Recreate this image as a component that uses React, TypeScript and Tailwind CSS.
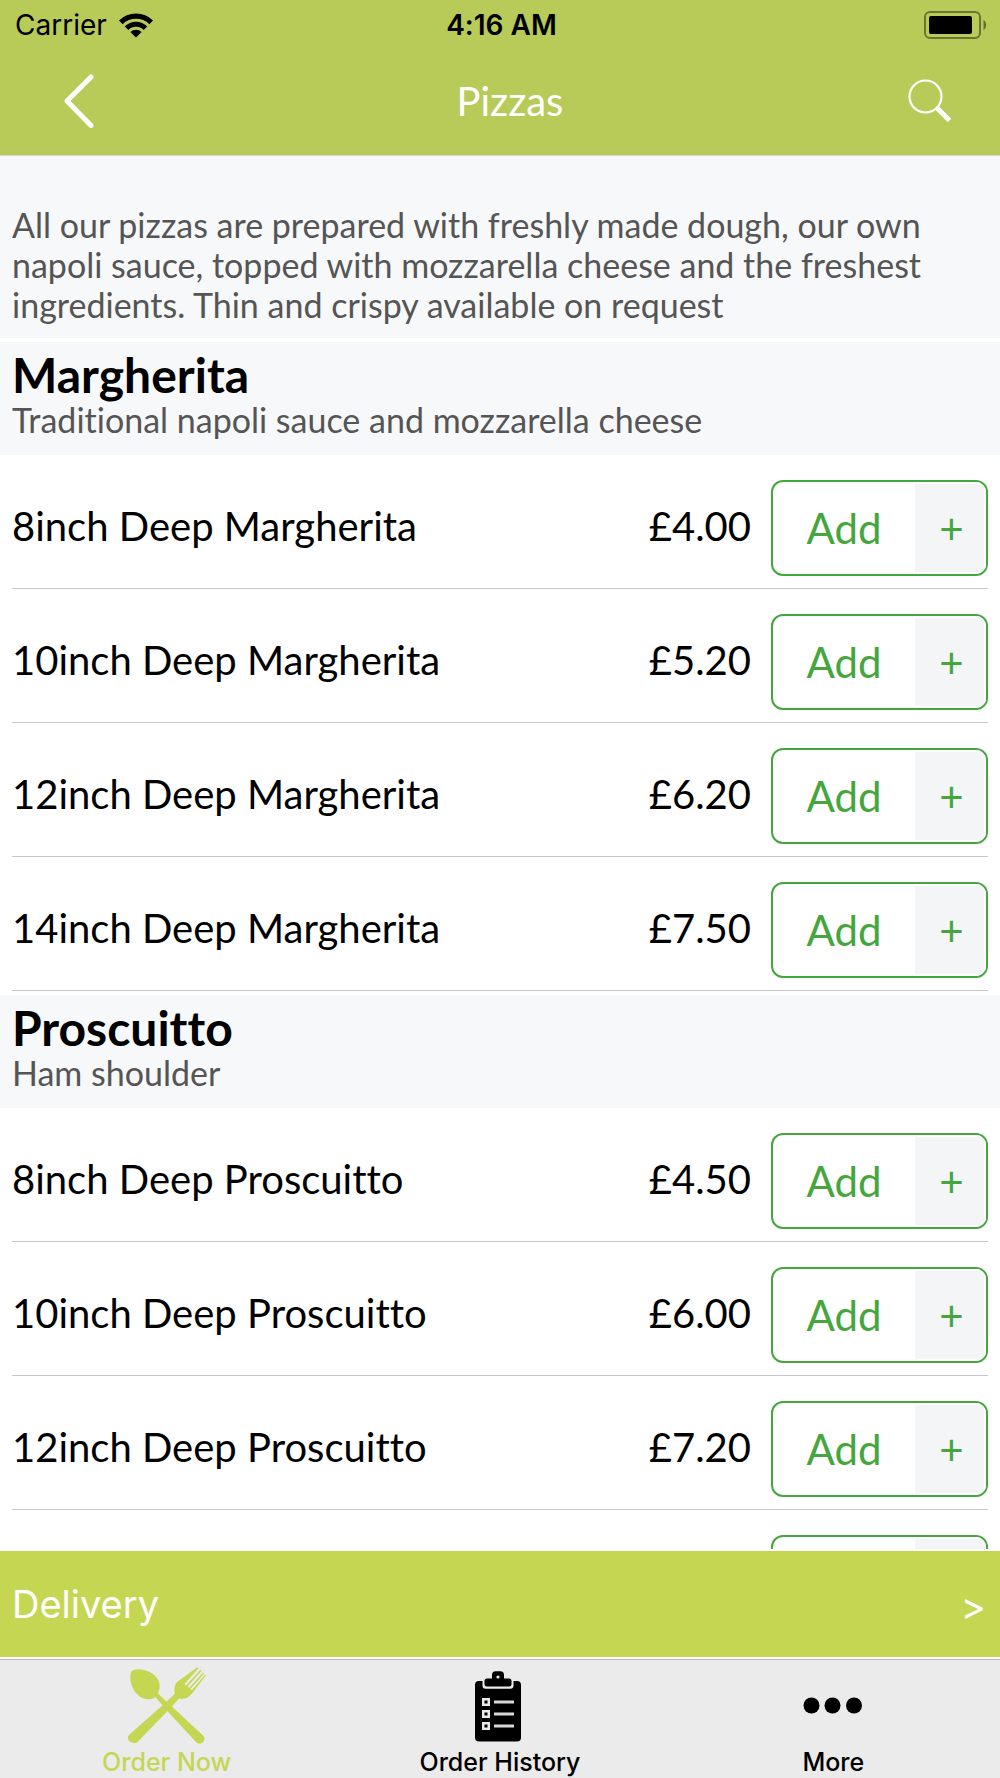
import React from "react";

type Item = { name: string; price: string };
type Section = { title: string; description: string; items: Item[] };

const sections: Section[] = [
  {
    title: "Margherita",
    description: "Traditional napoli sauce and mozzarella cheese",
    items: [
      { name: "8inch Deep Margherita", price: "£4.00" },
      { name: "10inch Deep Margherita", price: "£5.20" },
      { name: "12inch Deep Margherita", price: "£6.20" },
      { name: "14inch Deep Margherita", price: "£7.50" },
    ],
  },
  {
    title: "Proscuitto",
    description: "Ham shoulder",
    items: [
      { name: "8inch Deep Proscuitto", price: "£4.50" },
      { name: "10inch Deep Proscuitto", price: "£6.00" },
      { name: "12inch Deep Proscuitto", price: "£7.20" },
    ],
  },
];

function WifiIcon() {
  return (
    <svg width="34" height="25" viewBox="0 0 34 25" aria-hidden="true">
      <path d="M0 7.500a24 24 0 0 1 34 0l-3.600 3.700a19 19 0 0 0-26.800 0z" />
      <path d="M5.700 13.300a16 16 0 0 1 22.600 0l-3.600 3.600a11 11 0 0 0-15.400 0z" />
      <path d="M11.400 19a8 8 0 0 1 11.200 0L17 24.600z" />
    </svg>
  );
}

function BatteryIcon() {
  return (
    <svg width="64" height="28" viewBox="0 0 64 28" aria-hidden="true">
      <rect x="1" y="1" width="55" height="26" rx="5" fill="none" stroke="#000" strokeOpacity="0.42" strokeWidth="2" />
      <rect x="5" y="5" width="43" height="18" rx="2" />
      <path d="M59.500 9c3.500 1.500 3.500 8.500 0 10z" fillOpacity="0.45" />
    </svg>
  );
}

function BackIcon() {
  return (
    <svg width="30" height="56" viewBox="0 0 30 56" fill="none" aria-hidden="true">
      <path d="M27 4L3 28l24 24.500" stroke="#fff" strokeWidth="5" strokeLinecap="round" strokeLinejoin="round" />
    </svg>
  );
}

function SearchIcon() {
  return (
    <svg width="44" height="44" viewBox="0 0 44 44" fill="none" stroke="#fff" aria-hidden="true">
      <circle cx="17.500" cy="17.500" r="16" strokeWidth="2.200" />
      <path d="M28.500 28.500L41.500 41.500" strokeWidth="5" />
    </svg>
  );
}

function CutleryIcon() {
  return (
    <svg width="80" height="80" viewBox="0 0 80 80" fill="currentColor" aria-hidden="true">
      <path d="M4 8C6 5 11 4.500 17 6c8 2 14.500 7.500 15.500 14 .5 4-.5 7-1.500 9.500l8.500 8L76 71.500c4.500 5-2.500 11-7 6.500L37.500 44 28.500 33c-3 2.500-8 3-12.500 1.300C8 31 1 19 4 8z" />
      <path d="M70.500 3.300l1 1L57.500 20l1.600 1.500L73.500 5.800l1 .9L60.500 22.500l1.600 1.500L76 8.500l1 .9L63.300 25l1.600 1.300L78 10.700l.8.800L66.500 27.500c-4.500 6.500-9.500 8.500-14.500 7L43.500 44 11 77.500C6.500 82-2.500 75.500 2 71L38 39l10-9.500c-1.500-4-.5-8 2-11.500z" />
    </svg>
  );
}

function ClipboardIcon() {
  return (
    <svg width="80" height="80" viewBox="0 0 80 80" aria-hidden="true">
      <rect x="15" y="17" width="46" height="60.500" rx="4" />
      <path d="M22.500 16v5.500q0 3.200 3.200 3.200h24.600q3.200 0 3.200-3.200V16z" fill="#ebebeb" />
      <path d="M27 14.500h5V11q0-3.700 3.700-3.700h4.600q3.700 0 3.700 3.700v3.500h5q2.500 0 2.500 2.500v3q0 2.500-2.500 2.500H27q-2.500 0-2.500-2.500v-3q0-2.500 2.500-2.500z" />
      <circle cx="38" cy="13" r="1.600" fill="#ebebeb" />
      {[34, 46, 58].map((y) => (
        <g key={y}>
          <rect x="22" y={y} width="8" height="8" fill="#ebebeb" />
          <rect x="24.500" y={y + 2.5} width="3" height="3" />
          <rect x="34" y={y + 2.5} width="20" height="3" fill="#d8d8d8" />
        </g>
      ))}
    </svg>
  );
}

function MoreIcon() {
  return (
    <svg width="80" height="80" viewBox="0 0 80 80" aria-hidden="true">
      <circle cx="18.500" cy="41.500" r="8" />
      <circle cx="39.500" cy="41.500" r="8" />
      <circle cx="61" cy="41.500" r="8" />
    </svg>
  );
}

function AddButton({ item }: { item: string }) {
  return (
    <button
      type="button"
      aria-label={`Add ${item}`}
      className="ml-5 flex h-24 w-[217px] shrink-0 overflow-hidden rounded-xl border-2 border-[#44a63c] text-[42px] leading-[48px] text-[#44a63c]"
    >
      <span className="flex flex-1 items-center justify-center">Add</span>
      <span className="flex w-[71px] items-center justify-center self-stretch border-2 border-l-0 border-white bg-[#f4f5f7] pl-1">
        +
      </span>
    </button>
  );
}

function NextRowPeek() {
  return (
    <div className="flex justify-end px-3 pt-[25px] pb-3" aria-hidden="true">
      <div className="flex h-24 w-[217px] justify-end overflow-hidden rounded-xl border-2 border-[#44a63c]">
        <div className="w-[71px] border-2 border-l-0 border-white bg-[#f4f5f7]" />
      </div>
    </div>
  );
}

function MenuSection({ section }: { section: Section }) {
  return (
    <section className="mt-1">
      <header className="h-[113px] bg-[#f7f8fa] px-3 pt-2">
        <h2 className="text-[48px] leading-[50px] font-bold">{section.title}</h2>
        <p className="text-[34px] leading-10 text-[#555]">{section.description}</p>
      </header>
      <ul className="px-3">
        {section.items.map((item) => (
          <li key={item.name} className="flex items-center border-b border-[#c8c8c8] pt-[25px] pb-3 text-[40px] leading-10">
            <span className="flex-1 pb-1">{item.name}</span>
            <span className="pb-1">{item.price}</span>
            <AddButton item={item.name} />
          </li>
        ))}
      </ul>
    </section>
  );
}

export default function App() {
  return (
    <div className="flex h-screen flex-col bg-white font-['Lato',sans-serif] text-black [font-variant-ligatures:none]">
      <header className="border-b border-[#d5d8d0] bg-[#b8ca58]">
        <div className="grid h-[50px] grid-cols-3 items-center pr-3 pl-[15px] font-['Inter',sans-serif] text-[28px] leading-8">
          <div className="flex items-center gap-3">
            <span>Carrier</span>
            <WifiIcon />
          </div>
          <span className="text-center font-semibold">4:16 AM</span>
          <div className="flex justify-end">
            <BatteryIcon />
          </div>
        </div>
        <div className="grid h-[105px] grid-cols-[112px_1fr_92px] items-center pb-1 text-white">
          <button type="button" aria-label="Back" className="flex justify-end pr-[18px]">
            <BackIcon />
          </button>
          <h1 className="text-center text-[40px] leading-10">Pizzas</h1>
          <button type="button" aria-label="Search" className="flex">
            <SearchIcon />
          </button>
        </div>
      </header>

      <main className="min-h-0 flex-1 overflow-y-auto [scrollbar-width:none]">
        <p className="bg-[#f7f8fa] px-3 pt-[49px] pb-[13px] text-[34px] leading-10 text-[#555]">
          All our pizzas are prepared with freshly made dough, our own napoli sauce, topped with mozzarella
          cheese and the freshest ingredients. Thin and crispy available on request
        </p>
        {sections.map((section) => (
          <MenuSection key={section.title} section={section} />
        ))}
        <NextRowPeek />
      </main>

      <button
        type="button"
        className="flex h-[110px] shrink-0 items-center justify-between border-y-2 border-white bg-[#c5d653] pr-[14px] pl-3 font-['Inter',sans-serif] text-[38px] leading-10 text-white"
      >
        <span>Delivery</span>
        <span className="pt-1">&gt;</span>
      </button>

      <nav className="grid h-[119px] shrink-0 grid-cols-3 border-t border-[#b8b8bc] bg-[#ebebeb] pt-1 font-['Inter',sans-serif] text-[25px] leading-7 font-medium">
        <a href="#order" className="flex flex-col items-center gap-1 text-[#c5d653]">
          <CutleryIcon />
          Order Now
        </a>
        <a href="#history" className="flex flex-col items-center gap-1">
          <ClipboardIcon />
          Order History
        </a>
        <a href="#more" className="flex flex-col items-center gap-1">
          <MoreIcon />
          More
        </a>
      </nav>
    </div>
  );
}
